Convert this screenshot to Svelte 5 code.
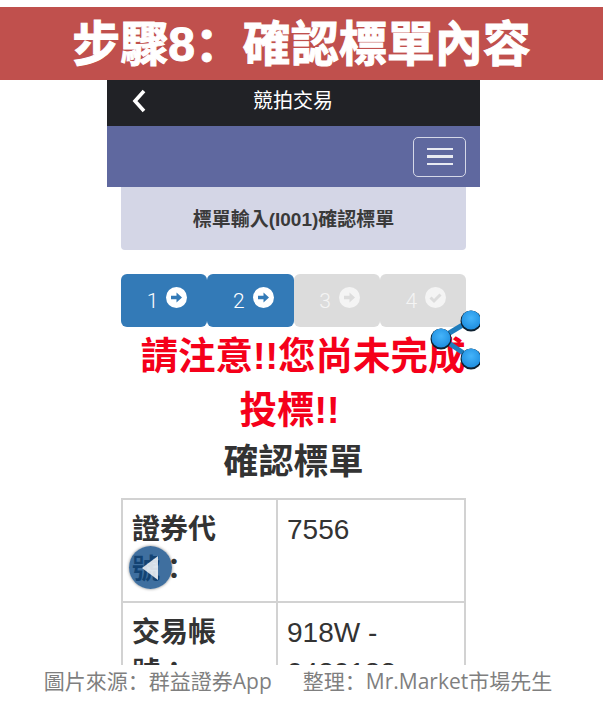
<script>
	const steps = [
		{ n: 1, active: true, icon: 'arrow' },
		{ n: 2, active: true, icon: 'arrow' },
		{ n: 3, active: false, icon: 'arrow' },
		{ n: 4, active: false, icon: 'check' }
	];
</script>

<div class="page">
	<h1 class="banner">步驟8：確認標單內容</h1>

	<div class="phone">
		<div class="topbar">
			<svg class="back" width="16" height="26" viewBox="0 0 16 26">
				<path d="M13 3 L4 13 L13 23" fill="none" stroke="#fff" stroke-width="3.6" />
			</svg>
			<span>競拍交易</span>
		</div>
		<div class="menubar">
			<div class="burger"><i></i><i></i><i></i></div>
		</div>
		<div class="heading">標單輸入(I001)確認標單</div>

		<div class="steps">
			{#each steps as step}
				<div class="step" class:active={step.active}>
					<span class="num">{step.n}</span>
					<svg class="badge" width="21" height="21" viewBox="0 0 21 21">
						<circle cx="10.5" cy="10.5" r="10.5" class="disc" />
						{#if step.icon === 'arrow'}
							<path class="mark" d="M5 8.8h5.5V5.5l5.5 5-5.5 5v-3.3H5z" />
						{:else}
							<path class="markline" d="M5.5 10.5l3.5 3.5 6.5-6.5" fill="none" stroke-width="3" />
						{/if}
					</svg>
				</div>
			{/each}
		</div>

		<div class="alert">
			<span class="line1">請注意!!您尚未完成</span>
			<span class="line2">投標!!</span>
		</div>
		<h2 class="title">確認標單</h2>

		<table>
			<tbody>
				<tr>
					<th>證券代號：</th>
					<td>7556</td>
				</tr>
				<tr>
					<th>交易帳號：</th>
					<td>918W - 0480188</td>
				</tr>
			</tbody>
		</table>

		<svg class="share" width="52" height="66" viewBox="0 0 52 66">
			<defs>
				<radialGradient id="node" cx="50%" cy="40%" r="60%">
					<stop offset="0%" stop-color="#45b4fa" />
					<stop offset="100%" stop-color="#1f8fe0" />
				</radialGradient>
			</defs>
			<path d="M12 32 L42 14 M12 32 L42 52" stroke="#1f7dbd" stroke-width="5" />
			<g fill="#0d2030">
				<circle cx="12" cy="33" r="10.5" />
				<circle cx="42" cy="15" r="10.5" />
				<circle cx="42" cy="53" r="10.5" />
			</g>
			<g fill="url(#node)">
				<circle cx="12" cy="32" r="9.5" />
				<circle cx="42" cy="14" r="9.5" />
				<circle cx="42" cy="52" r="9.5" />
			</g>
		</svg>

		<div class="sound">
			<svg width="24" height="28" viewBox="0 0 24 28">
				<path d="M19 2 L3 14 L19 26 Z" fill="#fff" fill-opacity="0.82" />
			</svg>
		</div>
	</div>

	<p class="caption">圖片來源：群益證券App<span class="gap"></span>整理：Mr.Market市場先生</p>
</div>

<style>
	:global(body) {
		margin: 0;
		background: #fff;
	}

	.page {
		width: 603px;
		height: 706px;
		padding-top: 7px;
		box-sizing: border-box;
		overflow: hidden;
		font-family: "Liberation Sans", "Noto Sans CJK TC", sans-serif;
	}

	.banner {
		margin: 0;
		height: 73px;
		line-height: 75px;
		background: #c0504d;
		color: #fff;
		font-family: "Liberation Sans", "Noto Sans CJK SC", sans-serif;
		font-size: 48px;
		font-weight: 700;
		-webkit-text-stroke: 1px #fff;
		text-align: center;
	}

	.phone {
		position: relative;
		width: 373px;
		height: 585px;
		margin-left: 107px;
		overflow: hidden;
		color: #333;
	}

	.topbar {
		position: relative;
		height: 46px;
		background: #212226;
		color: #fff;
		font-size: 20px;
		line-height: 42px;
		text-align: center;
	}

	.topbar span {
		margin-left: -1px;
	}

	.back {
		position: absolute;
		left: 24px;
		top: 8px;
	}

	.menubar {
		height: 61px;
		background: #5f689f;
		display: flex;
		justify-content: flex-end;
		align-items: center;
		padding-right: 14px;
	}

	.burger {
		width: 53px;
		height: 40px;
		box-sizing: border-box;
		border: 1px solid #d5d8e8;
		border-radius: 5px;
		display: flex;
		flex-direction: column;
		justify-content: center;
		align-items: center;
		gap: 5px;
	}

	.burger i {
		display: block;
		width: 26px;
		height: 2.5px;
		background: #e8eaf2;
	}

	.heading {
		margin: 0 14px;
		height: 63px;
		background: #d4d6e6;
		border-radius: 0 0 4px 4px;
		font-size: 19px;
		font-weight: 700;
		line-height: 65px;
		text-align: center;
		color: #3a3a3a;
	}

	.steps {
		display: grid;
		grid-template-columns: repeat(4, 1fr);
		margin: 24px 14px 0;
		height: 53px;
	}

	.step {
		background: #dcdcdc;
		color: #f4f4f4;
		border-radius: 6px;
		display: flex;
		justify-content: center;
		align-items: flex-start;
		gap: 8px;
		padding: 13px 0 0 6px;
		font-family: Roboto, sans-serif;
		font-size: 21px;
		font-weight: 300;
	}

	.step.active {
		background: #337ab7;
		color: #fff;
	}

	.num {
		line-height: 28px;
	}

	.disc {
		fill: #fff;
	}

	.step:not(.active) .disc {
		fill: #f4f4f4;
	}

	.mark {
		fill: #dcdcdc;
	}

	.markline {
		stroke: #dcdcdc;
	}

	.active .mark {
		fill: #337ab7;
	}

	.alert {
		width: 345px;
		margin: 2px 14px 0;
		color: #f5001a;
		font-size: 37.5px;
		font-weight: 700;
		line-height: 54px;
		text-align: center;
		white-space: nowrap;
	}

	.alert span {
		display: block;
	}

	.line1 {
		padding-left: 19px;
	}

	.line2 {
		padding-right: 8px;
	}

	.title {
		margin: 0;
		font-size: 35px;
		font-weight: 700;
		line-height: 50px;
		text-align: center;
		color: #333;
	}

	table {
		margin: 11px 14px 0;
		width: 345px;
		table-layout: fixed;
		border-collapse: collapse;
		font-size: 28px;
		line-height: 40px;
	}

	th,
	td {
		box-sizing: border-box;
		border: 2px solid #d2d2d2;
		padding: 10px 9px 11px;
		vertical-align: top;
		text-align: left;
	}

	th {
		width: 155px;
		font-weight: 700;
	}

	td {
		font-weight: 400;
	}

	.share {
		position: absolute;
		left: 322px;
		top: 226px;
	}

	.sound {
		position: absolute;
		left: 22px;
		top: 466px;
		width: 43px;
		height: 43px;
		border-radius: 50%;
		background: rgba(12, 72, 133, 0.79);
		box-shadow: 0 0 3px rgba(0, 0, 0, 0.5);
		display: flex;
		align-items: center;
		justify-content: center;
	}

	.caption {
		margin: 0;
		height: 41px;
		padding-right: 7px;
		background: #fff;
		color: #7f7f7f;
		font-family: "Open Sans", "Noto Sans CJK SC", sans-serif;
		font-size: 21px;
		line-height: 32px;
		text-align: center;
	}

	.gap {
		display: inline-block;
		width: 31px;
	}
</style>
